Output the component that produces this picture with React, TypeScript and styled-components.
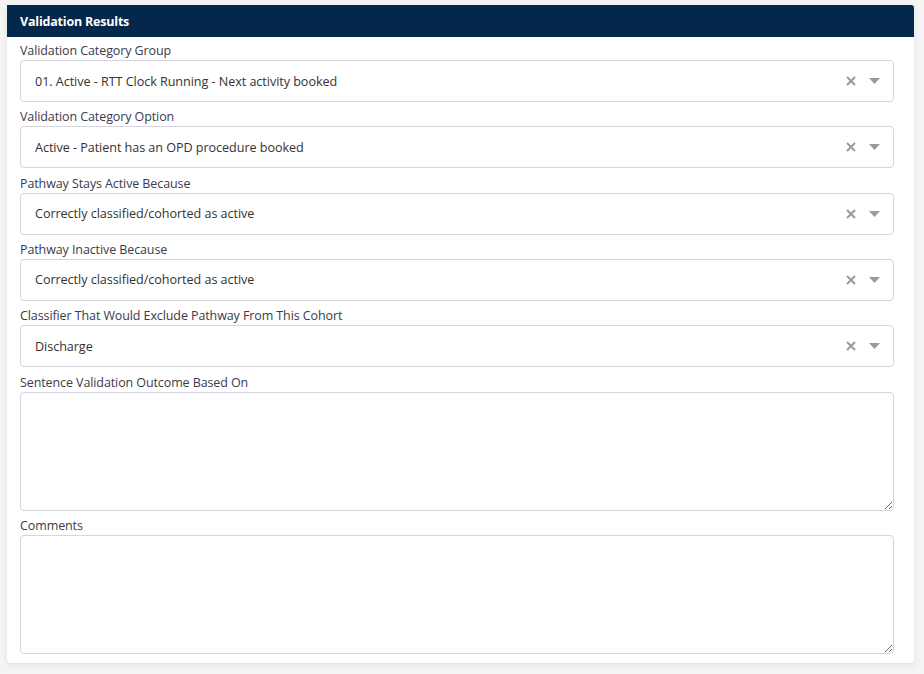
import React from 'react'
import styled, { createGlobalStyle } from 'styled-components'

const GlobalStyle = createGlobalStyle`
    body {
        margin: 0;
        background-color: #f4f4f5;
        font-family: 'Open Sans', 'Noto Sans', sans-serif;
        color: #333;
    }
`

const Page = styled.div`
    padding: 5px 10px 10px 7px;
`

const Card = styled.section`
    width: 907px;
    background-color: #fff;
    border-radius: 0 3px 4px 4px;
    box-shadow: 0 2px 6px rgba(0, 0, 0, 0.08);
    padding-bottom: 9px;
`

const CardHeader = styled.div`
    height: 32px;
    display: flex;
    align-items: center;
    padding-left: 13px;
    background-color: #04284b;
    color: #fff;
    font-size: 12.5px;
    font-weight: 700;
    border-radius: 0 3px 0 0;
    letter-spacing: -0.2px;
`

const CardBody = styled.div`
    display: flex;
    flex-direction: column;
    gap: 6.33px;
    padding: 5px 20px 0 13px;
`

const Field = styled.div`
    display: flex;
    flex-direction: column;
`

const Label = styled.label`
    font-size: 12.5px;
    color: #3b3b4a;
    height: 18px;
    line-height: 18px;
    letter-spacing: -0.1px;
`

const SelectBox = styled.div`
    box-sizing: border-box;
    height: 42px;
    display: flex;
    align-items: center;
    padding: 0 13px 0 14px;
    border: 1px solid #d6d5df;
    border-radius: 4px;
`

const SelectValue = styled.span`
    flex-grow: 1;
    font-size: 12.6px;
    color: #333;
    letter-spacing: -0.05px;
`

const Indicators = styled.div`
    display: flex;
    align-items: center;
    gap: 12px;
    color: #999;
`

const TextArea = styled.textarea`
    box-sizing: border-box;
    height: 119px;
    border: 1px solid #d6d5df;
    border-radius: 4px;
    resize: vertical;
    font-family: inherit;
    margin: 0;
    display: block;
`

const ClearIcon = () => (
    <svg width="12" height="12" viewBox="0 0 12 12">
        <path d="M2 2 L10 10 M10 2 L2 10" stroke="#9a9a9a" strokeWidth="2" />
    </svg>
)

const ArrowIcon = () => (
    <svg width="11" height="6" viewBox="0 0 11 6">
        <path d="M0 0 H11 L5.5 6 Z" fill="#9a9a9a" />
    </svg>
)

const selects = [
    { label: 'Validation Category Group', value: '01. Active - RTT Clock Running - Next activity booked' },
    { label: 'Validation Category Option', value: 'Active - Patient has an OPD procedure booked' },
    { label: 'Pathway Stays Active Because', value: 'Correctly classified/cohorted as active' },
    { label: 'Pathway Inactive Because', value: 'Correctly classified/cohorted as active' },
    { label: 'Classifier That Would Exclude Pathway From This Cohort', value: 'Discharge' },
]

export default function App() {
    return <Page>
        <GlobalStyle />
        <Card>
            <CardHeader>Validation Results</CardHeader>
            <CardBody>
                {selects.map(s => (
                    <Field key={s.label}>
                        <Label>{s.label}</Label>
                        <SelectBox>
                            <SelectValue>{s.value}</SelectValue>
                            <Indicators>
                                <ClearIcon />
                                <ArrowIcon />
                            </Indicators>
                        </SelectBox>
                    </Field>
                ))}
                <Field>
                    <Label>Sentence Validation Outcome Based On</Label>
                    <TextArea />
                </Field>
                <Field>
                    <Label>Comments</Label>
                    <TextArea />
                </Field>
            </CardBody>
        </Card>
    </Page>
}
